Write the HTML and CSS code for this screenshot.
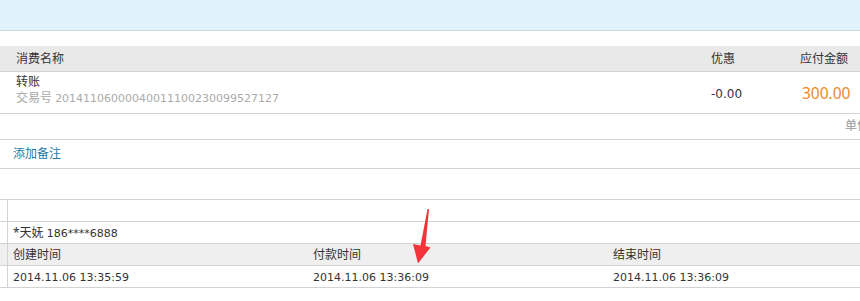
FILE: index.html
```html
<!DOCTYPE html>
<html lang="zh-CN">
<head>
    <meta charset="UTF-8">
    <title>订单详情</title>
    <link rel="stylesheet" href="styles.css">
</head>
<body>
<div class="page">
    <div class="topbar"></div>

    <!-- order items -->
    <div class="order">
        <div class="order-head">
            <div class="col-name">消费名称</div>
            <div class="col-off">优惠</div>
            <div class="col-pay">应付金额</div>
        </div>
        <div class="order-row">
            <div class="col-name">
                <div class="item-title">转账</div>
                <div class="trade-no">交易号 <span class="num">20141106000040011100230099527127</span></div>
            </div>
            <div class="col-off"><span class="num">-0.00</span></div>
            <div class="col-pay amount">300.00</div>
        </div>
        <div class="order-unit">单位：元</div>
        <div class="order-memo"><a href="#">添加备注</a></div>
    </div>

    <!-- trade info -->
    <div class="info">
        <div class="info-row">
            <div class="info-side"></div>
            <div class="info-cell"></div>
        </div>
        <div class="info-row">
            <div class="info-side"></div>
            <div class="info-cell">*天妩 <span class="num">186****6888</span></div>
        </div>
        <div class="info-row is-head">
            <div class="info-side"></div>
            <div class="info-cell">创建时间</div>
            <div class="info-cell">付款时间</div>
            <div class="info-cell">结束时间</div>
        </div>
        <div class="info-row">
            <div class="info-side"></div>
            <div class="info-cell"><span class="num">2014.11.06 13:35:59</span></div>
            <div class="info-cell"><span class="num">2014.11.06 13:36:09</span></div>
            <div class="info-cell"><span class="num">2014.11.06 13:36:09</span></div>
        </div>
    </div>

    <svg class="arrow" width="900" height="301" viewBox="0 0 900 301">
        <polygon points="429,209 425.5,246 430.5,247.5 418,263.5 413,244 420.5,245.5 427.5,209" fill="#f5333a"/>
    </svg>
</div>
</body>
</html>
```

FILE: styles.css
```css
* {
  box-sizing: border-box;
}

body {
  margin: 0;
  overflow: hidden;
  background: #fff;
  font-family: "Noto Sans", "Noto Sans CJK SC", sans-serif;
  font-size: 12px;
  color: #333;
}

/* numbers look like tahoma in the original */
.num {
  font-family: "DejaVu Sans", "Noto Sans CJK SC", sans-serif;
  font-size: 11px;
}

.page {
  position: relative;
  width: 900px;
}

.topbar {
  height: 31px;
  background: #e2f2fd;
  border-bottom: 1px solid #c8d9e6;
}

/* order block */
.order {
  margin-top: 15px;
}

.order-head,
.order-row {
  display: flex;
  border-bottom: 1px solid #d3d3d3;
}

.order-head {
  height: 26px;
  line-height: 25px;
  background: #e9e9e9;
}

.order-row {
  height: 42px;
  align-items: center;
}

.col-name {
  flex: 1;
  padding-left: 16px;
}

.col-off {
  width: 89px;
}

.col-pay {
  width: 100px;
}

.order-row .col-name {
  align-self: flex-start;
  padding-top: 2px;
  line-height: 16px;
}

.trade-no {
  color: #aaa;
}

.order-row .col-off {
  padding-top: 1px;
}

.order-row .col-off .num {
  font-size: 12px;
}

.amount {
  padding-left: 2px;
  font-size: 15.5px;
  color: #f0892e;
}

.order-unit {
  height: 26px;
  line-height: 24px;
  padding-right: 7px;
  text-align: right;
  color: #999;
  border-bottom: 1px solid #d3d3d3;
}

.order-memo {
  height: 29px;
  line-height: 28px;
  padding-left: 13px;
  border-bottom: 1px solid #d3d3d3;
}

.order-memo a {
  color: #1f78a6;
  text-decoration: none;
}

/* info table */
.info {
  margin-top: 30px;
  border-top: 1px solid #d3d3d3;
}

.info-row {
  display: flex;
  height: 22px;
  line-height: 21px;
  border-bottom: 1px solid #d3d3d3;
}

.info-row.is-head {
  background: #efefef;
}

.info-side {
  flex-shrink: 0;
  width: 8px;
  border-right: 1px solid #d3d3d3;
}

.info-cell {
  flex-shrink: 0;
  width: 300px;
  padding-left: 5px;
}

.info-cell:first-of-type {
  width: 301px;
}

.arrow {
  position: absolute;
  left: 0;
  top: 0;
  pointer-events: none;
}
```
